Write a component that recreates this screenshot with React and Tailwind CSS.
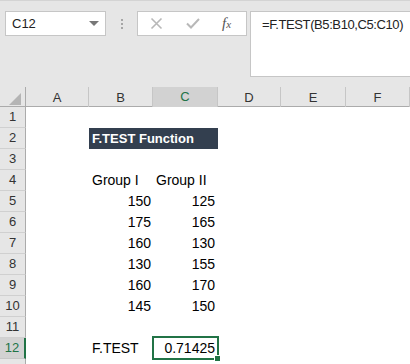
import React from 'react';

const COLS = ['A', 'B', 'C', 'D', 'E', 'F'];

const rows = [
  { n: 1 },
  { n: 2, title: 'F.TEST Function' },
  { n: 3 },
  { n: 4, b: 'Group I', c: 'Group II', text: true },
  { n: 5, b: '150', c: '125' },
  { n: 6, b: '175', c: '165' },
  { n: 7, b: '160', c: '130' },
  { n: 8, b: '130', c: '155' },
  { n: 9, b: '160', c: '170' },
  { n: 10, b: '145', c: '150' },
  { n: 11 },
  { n: 12, b: 'F.TEST', c: '0.71425', result: true },
];

const gridCols = 'grid grid-cols-[26px_63px_64px_65px_63px_65px_1fr]';

function Toolbar() {
  return (
    <div className="flex items-start h-[87px] pl-[5px] pt-[10px] border-t border-[#d4d4d4]">
      {/* name box */}
      <div className="w-[101px] h-[25px] bg-white border border-[#c6c6c6] flex items-center justify-between pl-[6px] pr-[6px] text-[13px] text-[#222]">
        <span>C12</span>
        <span className="w-0 h-0 border-l-[5px] border-r-[5px] border-t-[5px] border-l-transparent border-r-transparent border-t-[#777]" />
      </div>

      {/* grip dots */}
      <div className="ml-[15px] mt-[8px] flex flex-col gap-[2px]">
        <span className="w-[2px] h-[2px] bg-[#a6a6a6]" />
        <span className="w-[2px] h-[2px] bg-[#a6a6a6]" />
        <span className="w-[2px] h-[2px] bg-[#a6a6a6]" />
      </div>

      {/* cancel / enter / fx */}
      <div className="ml-[14px] w-[110px] h-[25px] bg-white border border-[#c6c6c6] flex items-center">
        <svg className="ml-[12px]" width="13" height="13" viewBox="0 0 13 13" fill="none" stroke="#b8b8b8" strokeWidth="1.6">
          <path d="M1.5 1.5 L11.5 11.5 M11.5 1.5 L1.5 11.5" />
        </svg>
        <svg className="ml-[23px]" width="14" height="11" viewBox="0 0 14 11" fill="none" stroke="#b8b8b8" strokeWidth="2">
          <path d="M1 5.5 L5 9.5 L13 1" />
        </svg>
        <span className="ml-[22px] font-['Liberation_Serif'] italic text-[15px] leading-none text-[#555]">
          f<span className="text-[11px]">x</span>
        </span>
      </div>

      {/* formula bar */}
      <div className="ml-[3px] flex-1 h-[66px] bg-white border border-[#c6c6c6] border-r-0 pl-[11px] pt-[4px] text-[13px] leading-[18px] tracking-[-0.4px] text-[#222]">
        =F.TEST(B5:B10,C5:C10)
      </div>
    </div>
  );
}

function HeaderRow() {
  return (
    <div className={`${gridCols} h-[20px] border-b border-[#ababab] text-[13px]`}>
      <div className="flex items-end justify-end pr-[4px] pb-[3px] border-r border-[#ababab]">
        <svg width="12" height="12" viewBox="0 0 12 12">
          <polygon points="12,0 12,12 0,12" fill="#b4b4b4" />
        </svg>
      </div>
      {COLS.map((c) => (
        <div key={c}
          className={c === 'C'
            ? 'flex items-center justify-center bg-[#d2d2d2] border-r border-[#c6c6c6] border-b-2 border-b-[#217346] -mb-[1px] text-[#217346]'
            : 'flex items-center justify-center border-r border-[#c6c6c6] text-[#333]'}>
          {c}
        </div>
      ))}
    </div>
  );
}

function Row({ r }) {
  const sel = r.result;
  return (
    <div className={`${gridCols} h-[21px] text-[14px] text-black`}>
      <div className={sel
        ? 'flex items-center justify-center bg-[#d2d2d2] border-b border-[#c6c6c6] border-r-2 border-r-[#217346] text-[13px] text-[#217346]'
        : 'flex items-center justify-center border-b border-[#d0d0d0] border-r border-r-[#ababab] text-[13px] text-[#333]'}>
        {r.n}
      </div>
      <div className="bg-white" />
      {r.title ? (
        <div className="col-span-2 bg-[#333f4f] text-white font-bold text-[13px] flex items-center pl-[3px]">
          {r.title}
        </div>
      ) : (
        <>
          <div className={`bg-white flex items-center ${r.text || sel ? 'pl-[3px]' : 'justify-end pr-[2px]'}`}>
            {r.b}
          </div>
          <div className={`relative bg-white flex items-center ${r.text ? 'pl-[3px]' : 'justify-end pr-[3px]'}`}>
            {r.c}
            {sel && (
              <div className="absolute -left-[1px] -right-[1px] -top-[2px] -bottom-[1px] border-2 border-[#217346]">
                <span className="absolute -right-[4px] -bottom-[4px] w-[7px] h-[7px] bg-[#217346] border border-white" />
              </div>
            )}
          </div>
        </>
      )}
      <div className="bg-white" />
      <div className="bg-white" />
      <div className="bg-white" />
    </div>
  );
}

export default function App() {
  return (
    <div className="w-[410px] h-[364px] overflow-hidden bg-[#e6e6e6] font-['Liberation_Sans',Arial,sans-serif]">
      <Toolbar />
      <HeaderRow />
      {rows.map((r) => <Row key={r.n} r={r} />)}
      <div className={`${gridCols} h-[10px]`}>
        <div className="border-r border-[#ababab]" />
        <div className="col-span-6 bg-white" />
      </div>
    </div>
  );
}
